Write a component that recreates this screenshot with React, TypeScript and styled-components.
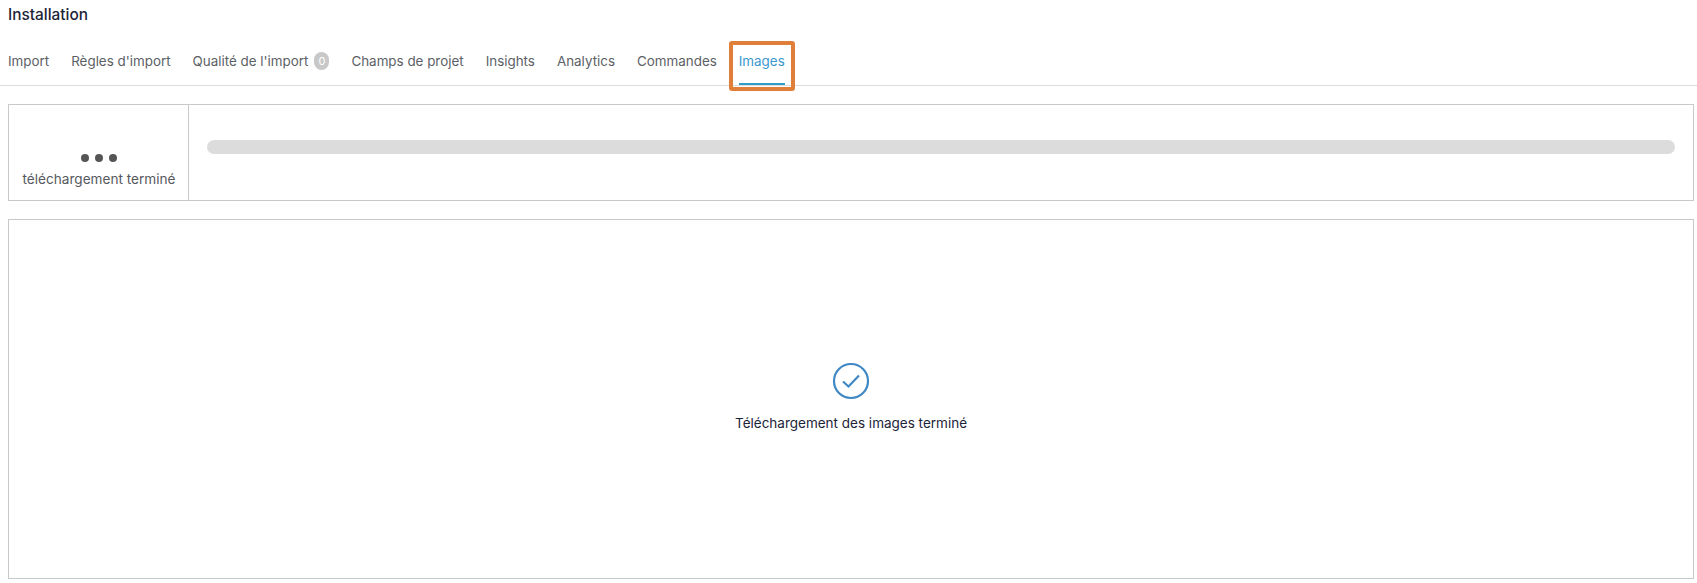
import React from 'react'
import styled, { createGlobalStyle } from 'styled-components'

const GlobalStyle = createGlobalStyle`
  html, body {
    margin: 0;
    background: #fff;
    font-family: Inter, 'Liberation Sans', sans-serif;
  }
  * { box-sizing: border-box; }
`

const Page = styled.div`
  width: 1697px;
  height: 583px;
  padding: 0 3px 4px 8px;
  display: flex;
  flex-direction: column;
  overflow: hidden;
`

const Title = styled.div`
  height: 30px;
  line-height: 30px;
  font-size: 15.4px;
  font-weight: 500;
  color: #1c2438;
`

const TabBar = styled.div`
  height: 56px;
  margin-left: -8px;
  margin-right: -3px;
  padding: 11px 0 0 8px;
  display: flex;
  gap: 22px;
  border-bottom: 1px solid #dcdcdc;
`

const Tab = styled.div<{ $active?: boolean }>`
  position: relative;
  height: 44px;
  padding-top: 10px;
  display: flex;
  align-items: flex-start;
  gap: 6px;
  line-height: 20px;
  font-size: 13.4px;
  color: ${p => (p.$active ? '#3a97cf' : '#5c5f66')};
  border-bottom: 2px solid ${p => (p.$active ? '#2f9bc9' : 'transparent')};
`

const Badge = styled.span`
  width: 15px;
  height: 18px;
  margin-top: 1px;
  border-radius: 8px;
  background: #c8c8c8;
  color: #fff;
  font-size: 11px;
  line-height: 18px;
  text-align: center;
`

const Highlight = styled.div`
  position: absolute;
  left: -10px;
  right: -10px;
  top: 0;
  height: 50px;
  border: 4px solid #e07f3a;
  border-radius: 3px;
  pointer-events: none;
`

const ProgressPanel = styled.section`
  height: 97px;
  margin-top: 18px;
  display: flex;
  border: 1px solid #c9c9c9;
`

const StatusCell = styled.div`
  width: 180px;
  padding: 49px 0 0 1px;
  display: flex;
  flex-direction: column;
  align-items: center;
  border-right: 1px solid #c9c9c9;
`

const Dots = styled.div`
  height: 8px;
  display: flex;
  gap: 6px;
`

const Dot = styled.span`
  width: 8px;
  height: 8px;
  border-radius: 50%;
  background: #555;
`

const StatusLabel = styled.div`
  margin-top: 7px;
  line-height: 20px;
  font-size: 13.6px;
  color: #55585e;
  white-space: nowrap;
`

const BarCell = styled.div`
  flex: 1;
  padding: 35px 18px 0;
`

const Track = styled.div`
  height: 14px;
  border-radius: 7px;
  background: #dcdcdc;
`

const ResultPanel = styled.section`
  flex: 1;
  margin-top: 18px;
  padding-top: 142px;
  display: flex;
  flex-direction: column;
  align-items: center;
  border: 1px solid #c9c9c9;
`

const Message = styled.div`
  margin-top: 13px;
  line-height: 20px;
  font-size: 13.5px;
  color: #1c2438;
`

const CheckIcon = () => (
  <svg width="38" height="38" viewBox="0 0 38 38" fill="none">
    <circle cx="19" cy="19" r="17" stroke="#3f88c5" strokeWidth="2.2" />
    <path d="M11 19.5l5.5 5 10.5-11" stroke="#3f88c5" strokeWidth="2.2" />
  </svg>
)

const tabs = ['Import', "Règles d'import", "Qualité de l'import", 'Champs de projet', 'Insights', 'Analytics', 'Commandes']

const App = () => (
  <>
    <GlobalStyle />
    <Page>
      <Title>Installation</Title>
      <TabBar>
        {tabs.map(name => (
          <Tab key={name}>
            {name}
            {name.startsWith('Qualité') && <Badge>0</Badge>}
          </Tab>
        ))}
        <Tab $active>
          Images
          <Highlight />
        </Tab>
      </TabBar>
      <ProgressPanel>
        <StatusCell>
          <Dots>
            <Dot />
            <Dot />
            <Dot />
          </Dots>
          <StatusLabel>téléchargement terminé</StatusLabel>
        </StatusCell>
        <BarCell>
          <Track />
        </BarCell>
      </ProgressPanel>
      <ResultPanel>
        <CheckIcon />
        <Message>Téléchargement des images terminé</Message>
      </ResultPanel>
    </Page>
  </>
)

export default App
